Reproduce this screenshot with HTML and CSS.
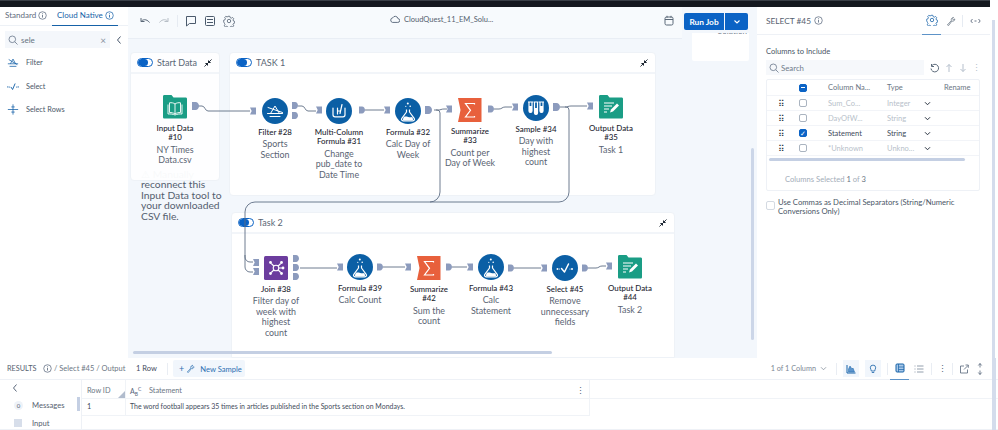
FILE: index.html
```html
<!DOCTYPE html>
<html lang="en">
<head>
<meta charset="utf-8">
<title>CloudQuest_11_EM_Solution</title>
<link rel="stylesheet" href="styles.css">
</head>
<body>
<svg class="defs" width="0" height="0" aria-hidden="true">
  <symbol id="i-info" viewBox="0 0 10 10"><circle cx="5" cy="5" r="4.2" fill="none" stroke="currentColor" stroke-width=".8"/><path d="M5 4.3v3M5 2.6v.9" stroke="currentColor" stroke-width=".9"/></symbol>
  <symbol id="i-gear" viewBox="0 0 14 14"><path d="M6 1.5h2l.4 1.6 1.4.6 1.4-.8 1.3 1.4-.8 1.4.6 1.4 1.4.4v1.9l-1.4.4-.6 1.4.8 1.4-1.3 1.4-1.4-.8-1.4.6-.4 1.5H6l-.4-1.5-1.4-.6-1.4.8-1.3-1.4.8-1.4-.6-1.4L.8 8V6.1l1.4-.4.6-1.4L2 2.9l1.3-1.4 1.4.8 1.4-.6z" fill="none" stroke="currentColor" stroke-width=".9"/><circle cx="7" cy="7" r="2" fill="none" stroke="currentColor" stroke-width=".9"/></symbol>
  <symbol id="i-wrench" viewBox="0 0 14 14"><path d="M2 12.5l5.5-6.2c-.6-1.900.6-4.300 3-4.300l-1.500 1.900 1.300 1.500 2-1.300c.2 2.500-2.200 3.800-4 3L3.500 13.500z" fill="none" stroke="currentColor" stroke-width=".9" stroke-linejoin="round"/></symbol>
  <symbol id="i-flask" viewBox="0 0 26 26"><g fill="none" stroke="#fff" stroke-width="1.200" stroke-linejoin="round"><path d="M11.500 11.500v2.500l-4.700 6.300c-.8 1.200 0 2.500 1.300 2.500h9.800c1.300 0 2.100-1.300 1.300-2.500L14.500 14v-2.500"/></g><path d="M8.800 19c2.800-1.500 5.400 1.200 8.400 0l1 2.500-.8.800H8.600l-.8-.8z" fill="#fff"/><circle cx="12.800" cy="5.500" r="1" fill="#fff"/><circle cx="15.200" cy="8.300" r=".8" fill="#fff"/><circle cx="10.800" cy="8.300" r=".6" fill="#fff"/></symbol>
  <symbol id="i-filter" viewBox="0 0 26 26"><g fill="none" stroke="#fff" stroke-width="1" stroke-linecap="round"><path d="M5.500 15.500h15M8 18.500h10M8.500 15.500L13 8l4.500 7.500M6 9.500l14.500 5"/></g></symbol>
  <symbol id="i-multi" viewBox="0 0 26 26"><g fill="none" stroke="#fff" stroke-width="1.200" stroke-linecap="round" stroke-linejoin="round"><path d="M7 10v6.800c0 1.200.8 2 2 2h8c1.200 0 2-.8 2-2V10"/><path d="M11.500 10v6M14 15.500l2-9M11.500 13h2.500"/></g></symbol>
  <symbol id="i-sample" viewBox="0 0 26 26"><g fill="none" stroke="#fff" stroke-width="1.200"><path d="M5 7h5M6 7v9c0 2 3 2 3 0V7M10.500 7h5M11.500 7v11c0 2 3 2 3 0V7M16 7h5M17 7v9c0 2 3 2 3 0V7"/></g><path d="M6 11h3v5c0 2-3 2-3 0zM11.500 13h3v5c0 2-3 2-3 0zM17 11h3v5c0 2-3 2-3 0z" fill="#fff"/></symbol>
  <symbol id="i-select" viewBox="0 0 26 26"><path d="M9.500 13.500l3 3.500 4-8" fill="none" stroke="#fff" stroke-width="1.500" stroke-linecap="round" stroke-linejoin="round"/><circle cx="5.500" cy="14" r="1" fill="#fff"/><circle cx="20" cy="14" r="1" fill="#fff"/><circle cx="7.500" cy="14" r=".5" fill="#fff"/><circle cx="18" cy="14" r=".5" fill="#fff"/></symbol>
  <symbol id="i-input" viewBox="0 0 24 24"><path d="M0 1.500C0 .5.500 0 1.500 0h7l2 2.500h12c1 0 1.500.5 1.500 1.500v18c0 1-.5 1.500-1.500 1.500h-21C.5 23.500 0 23 0 22z" fill="#1a9d85"/><path d="M12 9c-1.500-1.200-3.500-1.500-5.500-1.200v9.700c2 0 4 .3 5.500 1.500 1.500-1.200 3.500-1.500 5.500-1.500V7.800C15.500 7.500 13.500 7.800 12 9zM12 9v10M5 9.500v9.500c2.500-.2 5 .1 7 1 2-.9 4.500-1.200 7-1V9.500" fill="none" stroke="#fff" stroke-width=".9"/></symbol>
  <symbol id="i-output" viewBox="0 0 24 24"><path d="M0 1.500C0 .5.500 0 1.500 0h7l2 2.500h12c1 0 1.500.5 1.500 1.500v18c0 1-.5 1.500-1.500 1.500h-21C.5 23.500 0 23 0 22z" fill="#1a9d85"/><path d="M5 8h10M5 11h8M5 14h5M5 17h3" stroke="#fff" stroke-width="1.100" fill="none"/><path d="M11 17.500l1-3 6-6 2 2-6 6z" fill="#fff"/></symbol>
  <symbol id="i-sum" viewBox="0 0 24 24"><path d="M0 0h23.500v24H0l2.500-12z" fill="#e8603c"/><path d="M16.500 6.500v-1H7.500l5 6.800-5 6.700h9v-1" fill="none" stroke="#fff" stroke-width="1.200"/></symbol>
  <symbol id="i-join" viewBox="0 0 24 24"><rect width="24" height="24" rx="1.500" fill="#6c3d9e"/><g stroke="#fff" stroke-width="1.100" fill="none"><circle cx="12" cy="12" r="2.800"/><path d="M9.800 10l-2.500-2.500M14.200 10l2.500-2.500M9.800 14l-2.500 2.500M14.200 14l2.500 2.500M15 12h3"/></g><g fill="#fff"><circle cx="6.500" cy="6.500" r="1.400"/><circle cx="17.500" cy="6.500" r="1.400"/><circle cx="6.500" cy="17.500" r="1.400"/><circle cx="17.500" cy="17.500" r="1.400"/><circle cx="19" cy="12" r="1.400"/></g></symbol>
  <symbol id="i-collapse" viewBox="0 0 9 9"><path d="M8.500.5L5.500 3.500M3.500 5.500L.5 8.500" stroke="#1b2430" stroke-width="1"/><path d="M4.500 1v3.500H8M1 4.500h3.500V8" fill="#1b2430"/></symbol>
  <symbol id="i-out" viewBox="0 0 7 8"><path d="M0 0h3.500C5.500 0 7 2 7 4s-1.500 4-3.500 4H0z" fill="#8c9bbd"/></symbol>
  <symbol id="i-in" viewBox="0 0 7 8"><path d="M0 0h7v8H0l2-4z" fill="#8c9bbd"/></symbol>
</svg>

<div class="topbar"></div>

<div class="main">
  <aside class="tools">
    <div class="tool-tabs">
      <span class="tab">Standard <svg class="ico9"><use href="#i-info"/></svg></span>
      <span class="tab tab-on">Cloud Native <svg class="ico9"><use href="#i-info"/></svg></span>
    </div>
    <div class="tool-search-row">
      <div class="tool-search">
        <svg class="ico10" viewBox="0 0 10 10"><circle cx="4.300" cy="4.300" r="3.300" fill="none" stroke="#68768a" stroke-width=".8"/><path d="M6.800 6.800L9.500 9.500" stroke="#68768a" stroke-width=".8"/></svg>
        <span class="grow">sele</span>
        <span class="clear">×</span>
      </div>
      <svg class="chev" viewBox="0 0 6 10"><path d="M4.500 1.500L1.500 5l3 3.500" fill="none" stroke="#47566b" stroke-width="1"/></svg>
    </div>
    <ul class="tool-list">
      <li><svg class="tool-ico" viewBox="0 0 14 12"><g fill="none" stroke="#1662a8" stroke-width=".9"><path d="M1 7.500h12M3 10.500h8M4 7.500L7 2l3 5.500M2 2.500l10 6"/></g></svg>Filter</li>
      <li><svg class="tool-ico" viewBox="0 0 14 12"><path d="M4.500 6.500l2 3 3-7" fill="none" stroke="#1662a8" stroke-width="1.100"/><g fill="#1662a8"><circle cx="1" cy="6.500" r=".8"/><circle cx="3" cy="6.500" r=".6"/><circle cx="11" cy="6.500" r=".6"/><circle cx="13" cy="6.500" r=".8"/></g></svg>Select</li>
      <li><svg class="tool-ico" viewBox="0 0 14 12"><g stroke="#1662a8" stroke-width=".9" fill="none"><path d="M7 0v12M1 6h12M5 3h4M5 9h4"/></g></svg>Select Rows</li>
    </ul>
  </aside>

  <section class="canvas">
    <header class="toolbar">
      <div class="tb-main">
        <svg class="tb-ico" viewBox="0 0 12 12"><path d="M2 3v3.500h3.500M2.200 6.300C3.500 4.500 7.500 3.500 10.500 7.500" fill="none" stroke="#5a6878" stroke-width="1"/></svg>
        <svg class="tb-ico tb-dim" viewBox="0 0 12 12"><path d="M10 3v3.500H6.500M9.800 6.300C8.500 4.500 4.500 3.500 1.500 7.500" fill="none" stroke="#5a6878" stroke-width="1"/></svg>
        <span class="tb-sep"></span>
        <svg class="tb-ico" viewBox="0 0 12 12"><path d="M1.500 1.500h9v7H4.500l-3 2.500z" fill="none" stroke="#4b5a6c" stroke-width="1" stroke-linejoin="round"/></svg>
        <svg class="tb-ico" viewBox="0 0 12 12"><rect x="1.500" y="1.500" width="9" height="9" rx="1" fill="none" stroke="#4b5a6c"/><path d="M3 4.500h6M3 7.500h6" stroke="#4b5a6c"/></svg>
        <svg class="tb-ico tb-gear"><use href="#i-gear"/></svg>
        <div class="doc-title">
          <svg class="cloud" viewBox="0 0 12 10"><path d="M3 8.500h6.200a2.300 2.300 0 0 0 .3-4.600A3.300 3.300 0 0 0 3.300 3 2.800 2.800 0 0 0 3 8.500z" fill="none" stroke="#46556a" stroke-width="1"/></svg>
          CloudQuest_11_EM_Solu...
        </div>
        <svg class="cal" viewBox="0 0 10 11"><rect x="1" y="2" width="8" height="8" rx="1.500" fill="none" stroke="#5a6878"/><path d="M1 4.500h8M3 .8v2M7 .8v2" stroke="#5a6878"/></svg>
      </div>
      <div class="run">
        <span class="run-l">Run Job</span>
        <span class="run-r"><svg class="run-chev" viewBox="0 0 8 6"><path d="M1.500 1.500L4 4l2.500-2.500" fill="none" stroke="#fff" stroke-width="1.100"/></svg></span>
      </div>
    </header>

    <div class="stray"><span class="stray-t">Solution</span></div>

    <p class="note"><span class="faded">⚠ Manually</span><br>reconnect this<br>Input Data tool to<br>your downloaded<br>CSV file.</p>

    <div class="box box-start">
      <div class="box-h"><span class="toggle"></span><span class="box-t">Start Data</span><svg class="collapse"><use href="#i-collapse"/></svg></div>
    </div>
    <div class="box box-t1">
      <div class="box-h"><span class="toggle"></span><span class="box-t">TASK 1</span><svg class="collapse"><use href="#i-collapse"/></svg></div>
    </div>
    <div class="box box-t2">
      <div class="box-h"><span class="toggle"></span><span class="box-t">Task 2</span><svg class="collapse"><use href="#i-collapse"/></svg></div>
    </div>

    <svg class="wires" viewBox="128 7 629 351">
      <g fill="none" stroke="#5f6e84" stroke-width=".9">
        <path d="M198 106h4c3 0 3 5 6 5h42"/>
        <path d="M298 106h4c3 0 3 5 6 5h8"/>
        <path d="M365 110h19"/>
        <path d="M434 110h4c3 0 3-1 6-1h3"/>
        <path d="M494 109h5c3 0 3-2 6-2h7"/>
        <path d="M560 107h5c3 0 3-1 6-1h16"/>
        <path d="M436 110h1a3 3 0 0 1 3 3v79a10 10 0 0 1-10 10H255a10 10 0 0 0-10 10v45a5 5 0 0 0 5 5h3"/>
        <path d="M245 255v12a5 5 0 0 0 5 5h3"/>
        <path d="M565 107h1a3 3 0 0 1 3 3v82a10 10 0 0 1-10 10H430"/>
        <path d="M300 268h37"/>
        <path d="M383 267h22"/>
        <path d="M452 267h15"/>
        <path d="M514 268h27"/>
        <path d="M588 268h8c3 0 3-2 6-2h4"/>
      </g>
      <g class="anch">
        <use href="#i-out" x="192" y="102" width="7" height="8"/>
        <use href="#i-in" x="250" y="107" width="6" height="8"/>
        <use href="#i-out" x="292" y="102" width="6" height="7"/>
        <use href="#i-out" x="292" y="112" width="6" height="7"/>
        <use href="#i-in" x="316" y="106" width="6" height="8"/>
        <use href="#i-out" x="359" y="106" width="6" height="8"/>
        <use href="#i-in" x="384" y="106" width="6" height="8"/>
        <use href="#i-out" x="425" y="106" width="7" height="8"/>
        <use href="#i-in" x="446" y="105" width="6" height="8"/>
        <use href="#i-out" x="488" y="105" width="6" height="8"/>
        <use href="#i-in" x="512" y="103" width="6" height="8"/>
        <use href="#i-out" x="553" y="103" width="7" height="8"/>
        <use href="#i-in" x="587" y="102" width="6" height="8"/>
        <use href="#i-in" x="253" y="259" width="6" height="7"/>
        <use href="#i-in" x="253" y="268" width="6" height="7"/>
        <use href="#i-out" x="293" y="255" width="6" height="7"/>
        <use href="#i-out" x="293" y="264" width="6" height="7"/>
        <use href="#i-out" x="293" y="273" width="6" height="7"/>
        <use href="#i-in" x="337" y="263" width="6" height="8"/>
        <use href="#i-out" x="377" y="263" width="6" height="8"/>
        <use href="#i-in" x="405" y="263" width="6" height="8"/>
        <use href="#i-out" x="446" y="263" width="6" height="8"/>
        <use href="#i-in" x="467" y="263" width="6" height="8"/>
        <use href="#i-out" x="508" y="264" width="6" height="8"/>
        <use href="#i-in" x="541" y="264" width="6" height="8"/>
        <use href="#i-out" x="582" y="264" width="6" height="8"/>
        <use href="#i-in" x="606" y="262" width="6" height="8"/>
      </g>
    </svg>

    <div class="node n10"><svg class="ic-sq"><use href="#i-input"/></svg><div class="nm">Input Data<br>#10</div><div class="ds">NY Times<br>Data.csv</div></div>
    <div class="node n28"><span class="disc"><svg class="ic-c"><use href="#i-filter"/></svg></span><div class="nm">Filter #28</div><div class="ds">Sports<br>Section</div></div>
    <div class="node n31"><span class="disc"><svg class="ic-c"><use href="#i-multi"/></svg></span><div class="nm">Multi-Column<br>Formula #31</div><div class="ds">Change<br>pub_date to<br>Date Time</div></div>
    <div class="node n32"><span class="disc"><svg class="ic-c"><use href="#i-flask"/></svg></span><div class="nm">Formula #32</div><div class="ds">Calc Day of<br>Week</div></div>
    <div class="node n33"><svg class="ic-sq"><use href="#i-sum"/></svg><div class="nm">Summarize<br>#33</div><div class="ds">Count per<br>Day of Week</div></div>
    <div class="node n34"><span class="disc"><svg class="ic-c"><use href="#i-sample"/></svg></span><div class="nm">Sample #34</div><div class="ds">Day with<br>highest<br>count</div></div>
    <div class="node n35"><svg class="ic-sq"><use href="#i-output"/></svg><div class="nm">Output Data<br>#35</div><div class="ds">Task 1</div></div>

    <div class="node n38"><svg class="ic-sq"><use href="#i-join"/></svg><div class="nm">Join #38</div><div class="ds">Filter day of<br>week with<br>highest<br>count</div></div>
    <div class="node n39"><span class="disc"><svg class="ic-c"><use href="#i-flask"/></svg></span><div class="nm">Formula #39</div><div class="ds">Calc Count</div></div>
    <div class="node n42"><svg class="ic-sq"><use href="#i-sum"/></svg><div class="nm">Summarize<br>#42</div><div class="ds">Sum the<br>count</div></div>
    <div class="node n43"><span class="disc"><svg class="ic-c"><use href="#i-flask"/></svg></span><div class="nm">Formula #43</div><div class="ds">Calc<br>Statement</div></div>
    <div class="node n45"><span class="disc"><svg class="ic-c"><use href="#i-select"/></svg></span><div class="nm">Select #45</div><div class="ds">Remove<br>unnecessary<br>fields</div></div>
    <div class="node n44"><svg class="ic-sq"><use href="#i-output"/></svg><div class="nm">Output Data<br>#44</div><div class="ds">Task 2</div></div>

    <span class="scroll-v"></span>
    <span class="scroll-h"></span>
  </section>

  <aside class="config">
    <div class="cfg-head">
      <span class="cfg-title">SELECT #45</span>
      <svg class="ico9 cfg-info"><use href="#i-info"/></svg>
      <span class="cfg-tab cfg-tab-on"><svg class="ico11"><use href="#i-gear"/></svg></span>
      <span class="cfg-tab"><svg class="ico10"><use href="#i-wrench"/></svg></span>
      <span class="cfg-sep"></span>
      <svg class="cfg-arrows" viewBox="0 0 11 6"><path d="M2.500 1L.8 3l1.700 2M8.500 1l1.700 2-1.700 2M4.500 3h2" fill="none" stroke="#47566b" stroke-width=".8"/></svg>
    </div>
    <div class="cfg-body">
      <div class="cfg-label">Columns to Include</div>
      <div class="cfg-search-row">
        <div class="cfg-search">
          <svg class="ico10" viewBox="0 0 10 10"><circle cx="4.300" cy="4.300" r="3.300" fill="none" stroke="#68768a" stroke-width=".8"/><path d="M6.800 6.800L9.500 9.500" stroke="#68768a" stroke-width=".8"/></svg>
          Search
        </div>
        <svg class="act act-reset" viewBox="0 0 10 10"><path d="M2 2.500a3.800 3.800 0 1 1-1 3M1.500 1v2.500H4" fill="none" stroke="#4b5a6c" stroke-width=".9"/></svg>
        <svg class="act" viewBox="0 0 10 10"><path d="M5 9V1.500M2.500 4L5 1.500 7.500 4" fill="none" stroke="#b5bfcc"/></svg>
        <svg class="act" viewBox="0 0 10 10"><path d="M5 1v7.500M2.500 6L5 8.500 7.500 6" fill="none" stroke="#b5bfcc"/></svg>
        <span class="act-more">⋮</span>
      </div>
      <div class="grid-box">
        <div class="grid-row grid-head">
          <span></span>
          <span class="chk chk-mix"></span>
          <span class="col-n">Column Na...</span>
          <span class="col-t">Type</span>
          <span class="col-r">Rename</span>
        </div>
        <div class="grid-row row-off"><span class="drag">⠿</span><span class="chk"></span><span>Sum_Co...</span><span>Integer</span><span class="dd"><svg class="dd-ico" viewBox="0 0 8 6"><path d="M1 1.500L4 4.500l3-3" fill="none" stroke="#28323f" stroke-width="1.200"/></svg></span></div>
        <div class="grid-row row-off"><span class="drag">⠿</span><span class="chk"></span><span>DayOfW...</span><span>String</span><span class="dd"><svg class="dd-ico" viewBox="0 0 8 6"><path d="M1 1.500L4 4.500l3-3" fill="none" stroke="#28323f" stroke-width="1.200"/></svg></span></div>
        <div class="grid-row"><span class="drag">⠿</span><span class="chk chk-on">✓</span><span>Statement</span><span>String</span><span class="dd"><svg class="dd-ico" viewBox="0 0 8 6"><path d="M1 1.500L4 4.500l3-3" fill="none" stroke="#28323f" stroke-width="1.200"/></svg></span></div>
        <div class="grid-row row-off"><span class="drag">⠿</span><span class="chk"></span><span>*Unknown</span><span>Unkno...</span><span class="dd"><svg class="dd-ico" viewBox="0 0 8 6"><path d="M1 1.500L4 4.500l3-3" fill="none" stroke="#28323f" stroke-width="1.200"/></svg></span></div>
        <div class="grid-scroll"></div>
        <div class="grid-foot">Columns Selected <b>1</b> of <b>3</b></div>
      </div>
      <label class="commas"><span class="chk chk-pale"></span><span>Use Commas as Decimal Separators (String/Numeric Conversions Only)</span></label>
    </div>
  </aside>
  <div class="page-scroll"><span class="page-thumb"></span></div>
</div>

<footer class="results">
  <div class="res-head">
    <span class="res-title">RESULTS</span>
    <svg class="ico9 res-info"><use href="#i-info"/></svg>
    <span class="crumb">/ Select #45 / Output</span>
    <span class="rows">1 Row</span>
    <span class="vsep"></span>
    <span class="new-sample"><span class="plus">+</span><svg class="ico10"><use href="#i-wrench"/></svg>New Sample</span>
    <span class="grow"></span>
    <span class="cols">1 of 1 Column <svg class="cols-ico" viewBox="0 0 8 6"><path d="M1 1.500L4 4.500l3-3" fill="none" stroke="#7d8795" stroke-width=".9"/></svg></span>
    <span class="vsep"></span>
    <span class="res-btn"><svg class="ico10" viewBox="0 0 10 10"><path d="M1 1v8h8.500" fill="none" stroke="#1662a8"/><path d="M2.500 8V5l1.500-3 2 3 1 -1 1.500 4z" fill="#5c94cc" stroke="#1662a8" stroke-width=".5"/></svg></span>
    <span class="res-btn"><svg class="ico10" viewBox="0 0 10 10"><path d="M3.300 7c0-1.500-1-2-1-3.200a2.700 2.700 0 0 1 5.400 0C7.700 5 6.700 5.500 6.700 7zM3.800 8.500h2.400" fill="none" stroke="#1662a8" stroke-width=".8"/></svg></span>
    <span class="vsep"></span>
    <span class="view view-on"><svg class="ico10" viewBox="0 0 10 10"><rect x="1" y="1" width="8" height="8" rx="1" fill="#a9c8e8" stroke="#1662a8"/><path d="M3.500 1v8M3.500 4H9M3.500 6.500H9" stroke="#1662a8" stroke-width=".7"/></svg></span>
    <span class="view view-list"><svg class="ico10" viewBox="0 0 10 10"><path d="M3 2h6.500M3 5h6.500M3 8h6.500M.5 2h1M.5 5h1M.5 8h1" stroke="#66758a" stroke-width=".7"/></svg></span>
    <span class="vsep"></span>
    <span class="more">⋮</span>
    <span class="vsep"></span>
    <svg class="ico10 ext" viewBox="0 0 10 10"><path d="M5 2H1.500v7h7V5.500M5 5.500L9 1.500M6.500 1H9.300v2.800" fill="none" stroke="#56657a" stroke-width=".8"/></svg>
    <svg class="ico10 expand" viewBox="0 0 10 12"><path d="M5 .5v4M3.300 2.500L5 .5l1.700 2M5 11.500v-4M3.300 9.500L5 11.500l1.700-2" fill="none" stroke="#56657a" stroke-width=".8"/></svg>
  </div>
  <div class="res-body">
    <nav class="res-nav">
      <svg class="nav-back" viewBox="0 0 6 10"><path d="M4.500 1.500L1.500 5l3 3.500" fill="none" stroke="#47566b" stroke-width=".9"/></svg>
      <div class="nav-item"><span class="badge">0</span>Messages</div>
      <div class="nav-item nav-input"><span class="nav-sq"></span>Input</div>
      <span class="nav-scroll"></span>
    </nav>
    <div class="table">
      <div class="t-row t-head">
        <span class="t-id">Row ID<i class="corner"></i></span>
        <span class="t-col"><span class="abc">A<sub>B</sub><sup>C</sup></span>Statement<span class="t-more">⋮</span></span>
      </div>
      <div class="t-row t-data">
        <span class="t-id t-one">1</span>
        <span class="t-col t-val">The word football appears 35 times in articles published in the Sports section on Mondays.</span>
      </div>
    </div>
  </div>
  <span class="res-scroll"></span>
</footer>
</body>
</html>
```

FILE: styles.css
```css
* { box-sizing: border-box; }
html, body { margin: 0; padding: 0; }
body {
  width: 998px;
  height: 430px;
  overflow: hidden;
  background: #fff;
  font-family: Lato, "Liberation Sans", sans-serif;
  font-size: 8px;
  color: #3f4b5b;
  display: flex;
  flex-direction: column;
  white-space: nowrap;
}
.defs { position: absolute; }
.grow { flex: 1; }
.ico9 { width: 9px; height: 9px; color: #56657a; flex: none; }
.ico10 { width: 10px; height: 10px; flex: none; }
.ico11 { width: 12px; height: 12px; flex: none; }

.topbar { height: 7px; width: 990px; background: #14181f; border-top: 1px solid #3a3f47; flex: none; }

.main { height: 351px; display: flex; flex: none; }

/* tool palette */
.tools { width: 128px; background: #fff; flex: none; }
.tool-tabs { height: 19px; display: flex; border-bottom: 1px solid #edf1f6; }
.tab { width: 52px; height: 19px; padding: 3px 0 0 5px; font-size: 8px; color: #5f6c7d; display: inline-flex; gap: 2px; align-items: flex-start; line-height: 10px; }
.tab .ico9 { margin-top: 1px; }
.tab-on { width: 66px; color: #1662a8; border-bottom: 1px solid #1662a8; }
.tab-on .ico9 { color: #1662a8; }
.tool-search-row { display: flex; align-items: center; padding: 5px 0 0 5px; }
.tool-search { width: 105px; height: 17px; background: #f4f7fb; display: flex; align-items: center; gap: 3px; padding: 0 4px 0 3px; font-size: 8px; color: #66727f; }
.clear { color: #8a94a1; font-size: 10px; }
.chev { width: 6px; height: 10px; margin-left: 6px; }
.tool-list { list-style: none; margin: 0; padding: 0 0 0 7px; }
.tool-list li { display: flex; align-items: center; gap: 7px; height: 23.500px; font-size: 7.300px; color: #4a5768; }
.tool-list li:first-child { margin-top: 3px; }
.tool-ico { width: 12px; height: 11px; flex: none; }

/* canvas */
.canvas { position: relative; width: 629px; background: #f3f7fc; flex: none; overflow: hidden; }
.toolbar { display: flex; align-items: flex-start; height: 32px; }
.tb-main { width: 554px; height: 32px; display: flex; align-items: center; border-bottom: 1px solid #e9eef5; background: #f7fafd; padding: 0 0 4px 11px; gap: 7px; }
.tb-ico { width: 12px; height: 12px; flex: none; }
.tb-gear { color: #4b5a6c; }
.tb-dim { opacity: .4; }
.tb-sep { width: 1px; height: 12px; background: #e6ebf2; }
.doc-title { display: flex; align-items: center; gap: 4px; font-size: 7.500px; color: #55616f; margin-left: 148px; width: 267px; flex: none; padding-bottom: 2px; }
.cloud { width: 10px; height: 9px; }
.cal { width: 10px; height: 11px; flex: none; }
.run { display: flex; height: 17px; margin: 6px 0 0 2px; color: #fff; font-size: 8.300px; font-weight: 700; }
.run-l { width: 40px; background: #0b63c5; border-radius: 2px 0 0 2px; display: flex; align-items: center; justify-content: center; }
.run-r { width: 23px; margin-left: 1px; background: #0b63c5; border-radius: 0 2px 2px 0; display: flex; align-items: center; justify-content: center; }
.run-chev { width: 8px; height: 6px; }

.stray { position: absolute; left: 564px; top: 26px; width: 57px; height: 28px; background: #fff; border-radius: 0 0 2px 2px; text-align: right; padding-right: 2px; overflow: hidden; line-height: 10px; }
.stray-t { position: relative; top: -7px; font-size: 8px; color: #6c7685; }

.note { position: absolute; left: 13px; top: 162px; margin: 0; font-size: 10.300px; line-height: 10.400px; color: #55606f; }
.faded { opacity: .25; }

.box { position: absolute; background: #fff; border-radius: 4px; border: 1px solid #eef2f7; }
.box-start { left: 2px; top: 45px; width: 90px; height: 129px; background: rgba(255,255,255,.86); }
.box-t1 { left: 101px; top: 45px; width: 427px; height: 144px; }
.box-t2 { left: 103px; top: 205px; width: 444px; height: 146px; border-radius: 4px 4px 0 0; }
.box-h { height: 21px; display: flex; align-items: center; padding: 0 7px 0 6px; border-bottom: 2px solid #f2f5f9; gap: 4px; font-size: 9px; color: #5a6675; }
.box-t { flex: 1; }
.toggle { width: 16px; height: 9px; border-radius: 5px; background: #fff; border: 1px solid #0b63c5; position: relative; flex: none; overflow: hidden; }
.toggle::before { content: ""; position: absolute; left: 0; top: 0; bottom: 0; width: 10px; background: #0b63c5; border-radius: 4px; }
.collapse { width: 8px; height: 8px; flex: none; }

.wires { position: absolute; left: 0; top: 0; width: 629px; height: 351px; pointer-events: none; }

.node { position: absolute; width: 90px; display: flex; flex-direction: column; align-items: center; text-align: center; }
.ic-sq { width: 24px; height: 24px; margin-bottom: 5px; }
.disc { width: 26px; height: 26px; border-radius: 50%; background: #0b5fa5; margin-bottom: 4px; flex: none; }
.ic-c { width: 26px; height: 26px; display: block; }
.nm { font-size: 7.900px; line-height: 9.300px; color: #1d2530; font-weight: 500; }
.ds { font-size: 8.900px; line-height: 10.500px; color: #5a6473; margin-top: 2px; }

.n10 { left: 2px; top: 88px; }
.n28 { left: 102px; top: 91px; }
.n31 { left: 166px; top: 91px; }
.n32 { left: 235px; top: 91px; }
.n33 { left: 297px; top: 91px; }
.n34 { left: 363px; top: 88px; }
.n35 { left: 438px; top: 88px; }
.n38 { left: 103px; top: 249px; }
.n39 { left: 187px; top: 247px; }
.n42 { left: 256px; top: 249px; }
.n43 { left: 318px; top: 247px; }
.n45 { left: 392px; top: 248px; }
.n44 { left: 457px; top: 248px; }

.scroll-v { position: absolute; left: 623px; top: 141px; width: 3px; height: 192px; background: #ccd6e8; border-radius: 2px; }
.scroll-h { position: absolute; left: 5px; top: 344px; width: 419px; height: 3px; background: #c4cfe3; border-radius: 2px; }

/* config */
.config { width: 233px; background: #fff; flex: none; }
.cfg-head { height: 28px; display: flex; align-items: center; padding: 0 0 0 9px; border-bottom: 1px solid #eef1f6; }
.cfg-title { font-size: 8.300px; color: #56616f; width: 48px; }
.cfg-info { margin-right: 99px; }
.cfg-tab { width: 19px; height: 28px; display: flex; align-items: center; justify-content: center; color: #4b5a6c; }
.cfg-tab-on { border-bottom: 1px solid #5d93c8; color: #1662a8; }
.cfg-sep { width: 1px; height: 12px; background: #e6ebf2; margin: 0 7px 0 2px; }
.cfg-arrows { width: 11px; height: 6px; }
.cfg-body { padding: 11px 10px 0 9px; }
.cfg-label { font-size: 7.600px; line-height: 10px; color: #4a5666; }
.cfg-search-row { display: flex; align-items: center; height: 15px; margin-top: 4px; gap: 4px; }
.cfg-search { width: 161px; height: 15px; background: #f6f8fb; display: flex; align-items: center; gap: 2px; padding-left: 3px; font-size: 7.800px; color: #707c8b; margin-right: 2px; }
.act { width: 10px; height: 10px; flex: none; }
.act-more { color: #b5bfcc; font-size: 9px; width: 8px; text-align: center; }
.grid-box { margin-top: 4px; width: 214px; height: 112px; border: 1px solid #eef1f6; border-radius: 2px; }
.grid-row { display: grid; grid-template-columns: 28px 33px 59px 37px 1fr; height: 15px; align-items: center; font-size: 7.500px; color: #3f4b5b; border-bottom: 1px solid #f2f4f8; }
.grid-head { height: 16px; color: #6b7684; }
.col-r { padding-left: 20px; grid-column: 5; }
.row-off { color: #b8bfca; }
.drag { text-align: center; color: #2a3340; font-size: 9px; line-height: 9px; }
.dd { display: flex; }
.dd-ico { width: 7px; height: 5px; }
.chk { width: 8px; height: 8px; border: 1px solid #aab4c0; border-radius: 2px; display: block; margin-left: 4px; }
.chk-on { background: #0b63c5; border-color: #0b63c5; color: #fff; font-size: 7px; line-height: 7px; text-align: center; }
.chk-mix { background: #0b63c5; border-color: #0b63c5; position: relative; }
.chk-mix::after { content: ""; position: absolute; left: 1px; right: 1px; top: 2.500px; height: 1px; background: #fff; }
.chk-pale { margin: 3px 3px 0 0; flex: none; width: 9px; height: 9px; border-color: #d4dae2; }
.grid-scroll { width: 196px; height: 3px; margin: 2px 0 0 2px; background: #c4cfe3; border-radius: 2px; }
.grid-foot { padding: 13px 0 0 18px; font-size: 7.600px; line-height: 10px; color: #a4adb9; }
.grid-foot b { color: #6a7482; font-weight: 400; }
.commas { display: flex; margin-top: 7px; font-size: 7.700px; line-height: 9px; color: #4a5666; width: 200px; white-space: normal; }

.page-scroll { flex: 1; position: relative; background: #fff; }
.page-thumb { position: absolute; left: 2px; top: 13px; width: 3px; height: 338px; background: #d4dcec; }

/* results */
.results { position: relative; flex: 1; background: #fff; display: flex; flex-direction: column; }
.res-head { height: 22px; display: flex; align-items: center; padding: 0 13px 0 7px; border-bottom: 1px solid #eef1f6; color: #56616f; font-size: 7.500px; flex: none; }
.res-title { width: 36px; font-size: 7.300px; }
.res-info { margin-right: 2px; }
.crumb { color: #6d7785; font-size: 7.500px; width: 82px; }
.rows { width: 31px; color: #3f4b5b; }
.vsep { width: 1px; height: 12px; background: #e9edf3; flex: none; }
.new-sample { display: flex; align-items: center; height: 17px; background: #f1f6fc; margin-left: 5px; padding: 0 0 0 6px; color: #2d6fb2; gap: 2px; border-radius: 2px; width: 72px; font-size: 7.600px; }
.new-sample .ico10 { color: #1662a8; margin-right: 3px; width: 9px; height: 9px; }
.plus { font-size: 9px; }
.cols { color: #7d8795; margin-right: 9px; font-size: 7.300px; display: flex; align-items: center; gap: 4px; }
.cols-ico { width: 7px; height: 5px; }
.res-btn { width: 16px; height: 17px; background: #f1f6fc; margin-left: 6px; display: flex; align-items: center; justify-content: center; flex: none; }
.res-btn + .vsep { margin-left: 6px; }
.view { width: 19px; height: 22px; display: flex; align-items: center; justify-content: center; flex: none; }
.view-on { border-bottom: 1px solid #5d93c8; margin-left: 2px; }
.view-list { margin-right: 3px; }
.more { width: 20px; text-align: center; color: #56657a; font-size: 9px; flex: none; }
.ext { margin: 0 6px 0 6px; }
.expand { height: 12px; }

.res-body { flex: 1; display: flex; border-bottom: 1px solid #eef1f6; overflow: hidden; }
.res-nav { position: relative; width: 82px; flex: none; border-right: 1px solid #eef1f6; }
.nav-back { position: absolute; left: 12px; top: 3px; width: 6px; height: 10px; }
.nav-item { position: absolute; left: 14px; top: 20px; display: flex; align-items: center; font-size: 7.600px; color: #56616f; }
.badge { width: 9px; height: 9px; border-radius: 50%; background: #eef2f8; font-size: 6px; line-height: 9px; text-align: center; margin-right: 9px; }
.nav-input { top: 38px; }
.nav-sq { width: 8px; height: 8px; background: #d7deea; margin-right: 10px; }
.nav-scroll { position: absolute; left: 77px; top: 17px; width: 3px; height: 14px; background: #c4cfe3; }
.table { flex: 1; }
.t-row { display: flex; height: 19px; border-bottom: 1px solid #f0f3f7; font-size: 7.300px; color: #4a5666; }
.t-data { height: 17px; width: 508px; }
.t-id { width: 44px; padding: 6px 0 0 5px; border-right: 1px solid #f0f3f7; position: relative; color: #6b7684; flex: none; }
.t-one { color: #3f4b5b; padding-top: 3px; }
.corner { position: absolute; right: 0; bottom: 0; width: 0; height: 0; border-left: 7px solid transparent; border-bottom: 7px solid #b1bccd; }
.t-col { width: 464px; flex: none; display: flex; align-items: center; position: relative; color: #6b7684; border-right: 1px solid #f0f3f7; padding-left: 4px; padding-top: 3px; }
.t-val { color: #3f4b5b; font-size: 6.950px; padding-top: 0; padding-bottom: 2px; }
.abc { display: inline-block; width: 19px; font-size: 7px; color: #56657a; }
.abc sub, .abc sup { font-size: 5px; line-height: 0; }
.t-more { position: absolute; right: 4px; top: 5px; color: #56657a; font-size: 9px; }
.res-scroll { position: absolute; left: 992px; top: 0; width: 4px; height: 72px; background: #d4dcec; }
```
